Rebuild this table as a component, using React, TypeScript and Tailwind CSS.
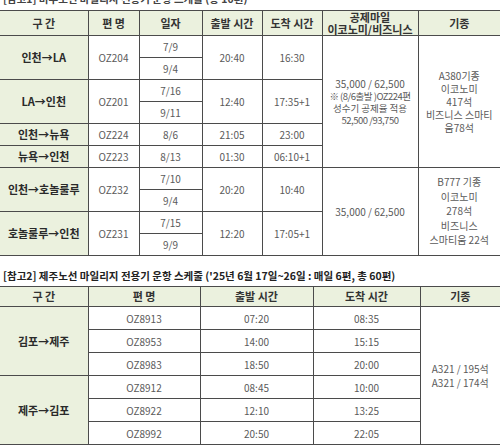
// Two flight-schedule tables: the US mileage flights and the Jeju mileage flights.
// Plain <table>s with rowSpan — the merged cells are the whole point of the layout.

type UsRoute = {
  route: string;
  flight: string;
  dates: string[];
  dep: string;
  arr: string;
};

const US_ROUTES: UsRoute[] = [
  { route: "인천→LA", flight: "OZ204", dates: ["7/9", "9/4"], dep: "20:40", arr: "16:30" },
  { route: "LA→인천", flight: "OZ201", dates: ["7/16", "9/11"], dep: "12:40", arr: "17:35+1" },
  { route: "인천→뉴욕", flight: "OZ224", dates: ["8/6"], dep: "21:05", arr: "23:00" },
  { route: "뉴욕→인천", flight: "OZ223", dates: ["8/13"], dep: "01:30", arr: "06:10+1" },
  { route: "인천→호놀룰루", flight: "OZ232", dates: ["7/10", "9/4"], dep: "20:20", arr: "10:40" },
  { route: "호놀룰루→인천", flight: "OZ231", dates: ["7/15", "9/9"], dep: "12:20", arr: "17:05+1" },
];

const JEJU = [
  {
    route: "김포→제주",
    rows: [
      ["OZ8913", "07:20", "08:35"],
      ["OZ8953", "14:00", "15:15"],
      ["OZ8983", "18:50", "20:00"],
    ],
  },
  {
    route: "제주→김포",
    rows: [
      ["OZ8912", "08:45", "10:00"],
      ["OZ8922", "12:10", "13:25"],
      ["OZ8992", "20:50", "22:05"],
    ],
  },
];

const cell = "border border-[#4b4b4b] p-0 text-center align-middle";
const head = `${cell} bg-[#ebf1de] font-bold text-[11px] text-[#333]`;
const body = `${cell} text-[10px] text-[#5a5a5a]`;
const routeCell = `${cell} bg-[#ebf1de] font-bold text-[11px] text-[#2a2a2a] border-l-0`;

function MilesCell({ rows, first }: { rows: number; first: boolean }) {
  return (
    <td rowSpan={rows} className={`${body} leading-[12px]`}>
      {first ? (
        <>
          <div>35,000 / 62,500</div>
          <div className="text-[9.5px] tracking-[-0.5px]">※ (8/6출발 )OZ224편</div>
          <div className="text-[9.5px]">성수기 공제율 적용</div>
          <div className="text-[9.5px] tracking-[-0.5px]">52,500 /93,750</div>
        </>
      ) : (
        <div>35,000 / 62,500</div>
      )}
    </td>
  );
}

function TypeCell({ rows, first }: { rows: number; first: boolean }) {
  const lines = first
    ? ["A380기종", "이코노미", "417석", "비즈니스 스마티", "움78석"]
    : ["B777 기종", "이코노미", "278석", "비즈니스", "스마티움 22석"];
  return (
    <td
      rowSpan={rows}
      className={`${body} border-r-0 ${first ? "leading-[13px]" : "leading-[14.5px]"}`}
    >
      {lines.map((l) => (
        <div key={l}>{l}</div>
      ))}
    </td>
  );
}

function UsTable() {
  return (
    <table className="w-[500px] table-fixed border-collapse">
      <colgroup>
        <col className="w-[88px]" />
        <col className="w-[51px]" />
        <col className="w-[63px]" />
        <col className="w-[60px]" />
        <col className="w-[60px]" />
        <col className="w-[96px]" />
        <col className="w-[82px]" />
      </colgroup>
      <thead>
        <tr className="h-[25px]">
          <th className={`${head} border-l-0`}>구 간</th>
          <th className={head}>편 명</th>
          <th className={head}>일자</th>
          <th className={head}>출발 시간</th>
          <th className={head}>도착 시간</th>
          <th className={`${head} text-[10.5px] leading-[12px]`}>
            <div>공제마일</div>
            <div>이코노미/비즈니스</div>
          </th>
          <th className={`${head} border-r-0`}>기종</th>
        </tr>
      </thead>
      <tbody>
        {US_ROUTES.map((r, i) =>
          r.dates.map((d, j) => {
            // the two merged blocks on the right start at LA and at Honolulu
            const startsGroup = j === 0 && (i === 0 || i === 4);
            const first = i === 0;
            return (
              <tr key={`${r.flight}-${d}`} className="h-[22px]">
                {j === 0 && (
                  <>
                    <td rowSpan={r.dates.length} className={routeCell}>
                      {r.route}
                    </td>
                    <td rowSpan={r.dates.length} className={body}>
                      {r.flight}
                    </td>
                  </>
                )}
                <td className={body}>{d}</td>
                {j === 0 && (
                  <>
                    <td rowSpan={r.dates.length} className={body}>
                      {r.dep}
                    </td>
                    <td rowSpan={r.dates.length} className={body}>
                      {r.arr}
                    </td>
                  </>
                )}
                {startsGroup && (
                  <>
                    <MilesCell rows={first ? 6 : 4} first={first} />
                    <TypeCell rows={first ? 6 : 4} first={first} />
                  </>
                )}
              </tr>
            );
          }),
        )}
      </tbody>
    </table>
  );
}

function JejuTable() {
  return (
    <table className="w-[500px] table-fixed border-collapse">
      <colgroup>
        <col className="w-[88px]" />
        <col className="w-[112px]" />
        <col className="w-[113px]" />
        <col className="w-[107px]" />
        <col className="w-[80px]" />
      </colgroup>
      <thead>
        <tr className="h-[20px]">
          <th className={`${head} border-l-0`}>구 간</th>
          <th className={head}>편 명</th>
          <th className={head}>출발 시간</th>
          <th className={head}>도착 시간</th>
          <th className={`${head} border-r-0`}>기종</th>
        </tr>
      </thead>
      <tbody>
        {JEJU.map((g, gi) =>
          g.rows.map(([flight, dep, arr], j) => (
            <tr key={flight} className="h-[23px]">
              {j === 0 && (
                <td rowSpan={g.rows.length} className={routeCell}>
                  {g.route}
                </td>
              )}
              <td className={body}>{flight}</td>
              <td className={body}>{dep}</td>
              <td className={body}>{arr}</td>
              {gi === 0 && j === 0 && (
                <td rowSpan={6} className={`${body} border-r-0 leading-[14px]`}>
                  <div>A321 / 195석</div>
                  <div>A321 / 174석</div>
                </td>
              )}
            </tr>
          )),
        )}
      </tbody>
    </table>
  );
}

export default function App() {
  return (
    <div
      className="h-[446px] w-[500px] overflow-hidden bg-white"
      style={{ fontFamily: '"Noto Sans CJK KR", "Noto Sans", sans-serif' }}
    >
      {/* caption sits half above the crop, as in the screenshot */}
      <p className="mt-[-9px] h-[19px] pl-[3px] text-[10.5px] font-bold leading-[16px] text-[#444]">
        [참고1] 미주노선 마일리지 전용기 운항 스케줄 (총 10편)
      </p>
      <UsTable />
      <p className="mt-[10px] h-[20px] pl-[3px] text-[10.5px] font-bold leading-[20px] text-[#222]">
        [참고2] 제주노선 마일리지 전용기 운항 스케줄 ('25년 6월 17일~26일 : 매일 6편, 총 60편)
      </p>
      <JejuTable />
    </div>
  );
}
